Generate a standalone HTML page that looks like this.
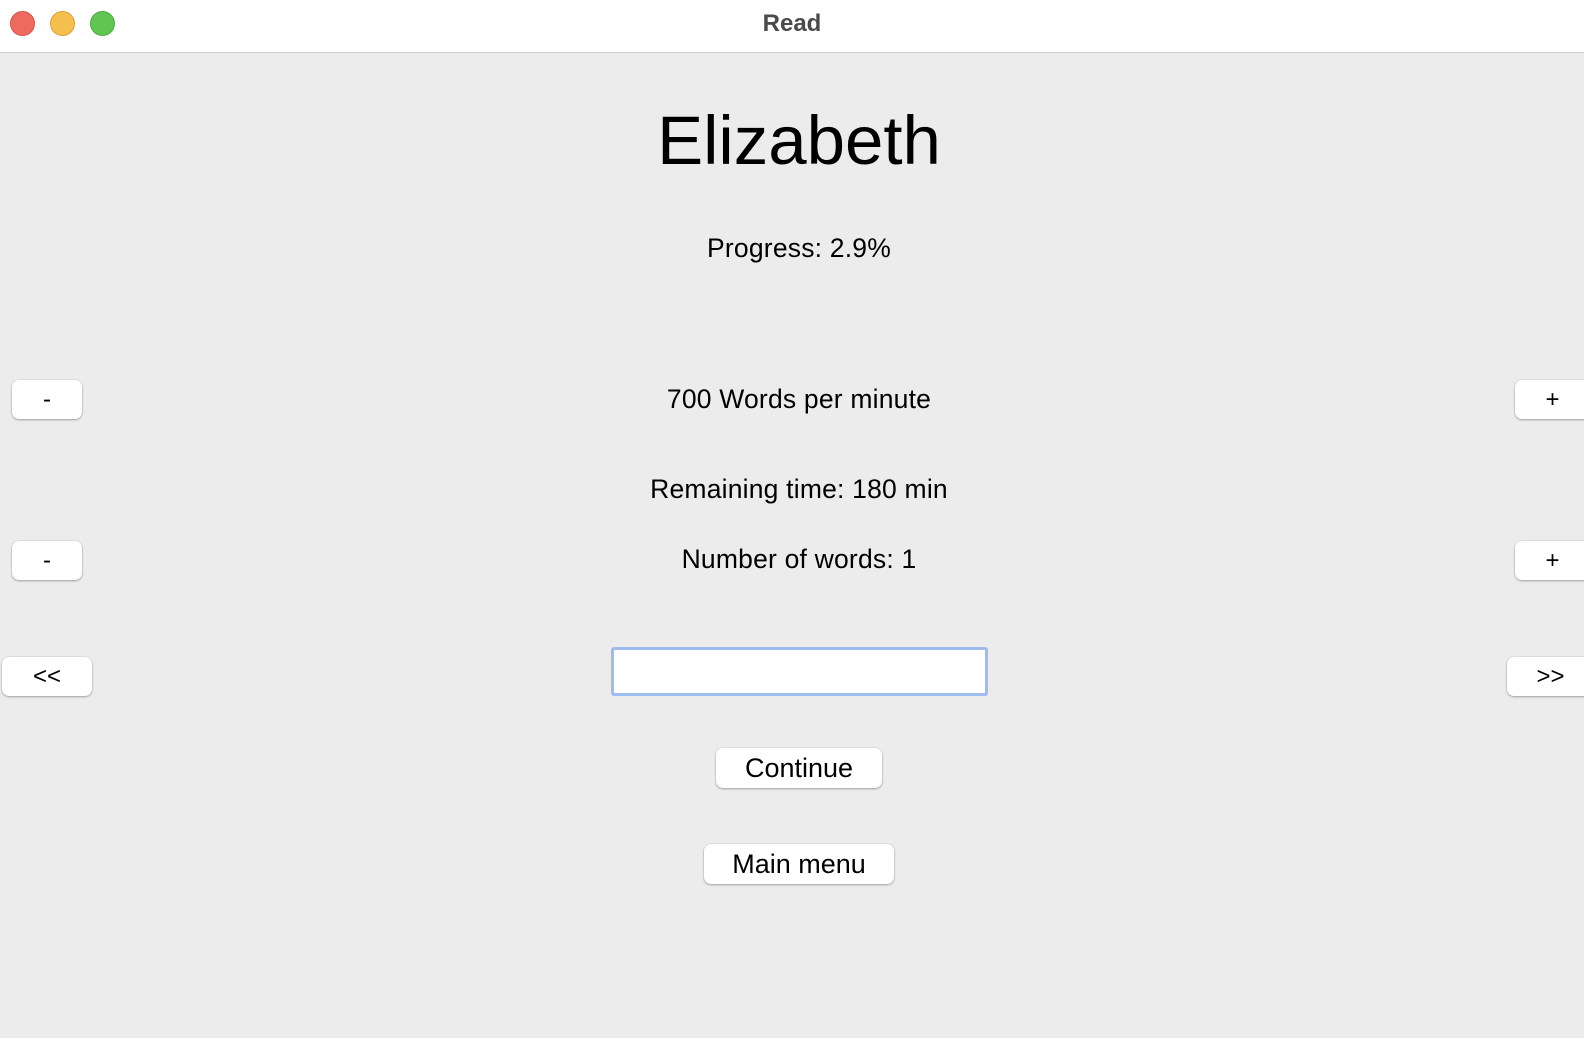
<!DOCTYPE html>
<html><head><style>
*{margin:0;padding:0;box-sizing:border-box}
body{width:1584px;height:1038px;background:#ececec;position:relative;overflow:hidden;font-family:"Liberation Sans",sans-serif;color:#000}
.bar{position:absolute;left:0;top:0;width:1584px;height:53px;background:#fff;border-bottom:1px solid #cfcfcf}
.dot{position:absolute;top:11px;width:25px;height:25px;border-radius:50%}
.c{position:absolute;width:1584px;left:7px;text-align:center;font-size:26.5px;letter-spacing:.2px}
.b{position:absolute;background:#fff;border-radius:7px;box-shadow:0 1px 2px rgba(0,0,0,.3),0 0 0 .5px rgba(0,0,0,.08);font-size:24px;text-align:center;line-height:39px;height:39px}
</style></head><body>
<div class="bar">
<div class="dot" style="left:10px;background:#ed6a5e;border:1px solid #d4544a"></div>
<div class="dot" style="left:50px;background:#f5bf4f;border:1px solid #d9a23a"></div>
<div class="dot" style="left:90px;background:#61c554;border:1px solid #4eab41"></div>
<div style="position:absolute;left:0;width:1584px;top:10px;text-align:center;font-weight:bold;font-size:24px;color:#4a4a4a">Read</div>
</div>
<div class="c" style="top:101px;font-size:69px;letter-spacing:0">Elizabeth</div>
<div class="c" style="top:233px">Progress: 2.9%</div>
<div class="c" style="top:384px">700 Words per minute</div>
<div class="c" style="top:474px">Remaining time: 180 min</div>
<div class="c" style="top:544px">Number of words: 1</div>
<div class="b" style="left:12px;top:380px;width:70px">-</div>
<div class="b" style="left:12px;top:541px;width:70px">-</div>
<div class="b" style="left:1515px;top:380px;width:80px;padding-right:5px">+</div>
<div class="b" style="left:1515px;top:541px;width:80px;padding-right:5px">+</div>
<div class="b" style="left:2px;top:657px;width:90px">&lt;&lt;</div>
<div class="b" style="left:1507px;top:657px;width:90px;padding-right:3px">&gt;&gt;</div>
<div style="position:absolute;left:611px;top:647px;width:377px;height:49px;background:#fff;border:3px solid #9dbdf0;border-radius:3px"></div>
<div class="b" style="left:716px;top:748px;width:166px;height:40px;line-height:40px;font-size:27px">Continue</div>
<div class="b" style="left:704px;top:844px;width:190px;height:40px;line-height:40px;font-size:27px">Main menu</div>
</body></html>
